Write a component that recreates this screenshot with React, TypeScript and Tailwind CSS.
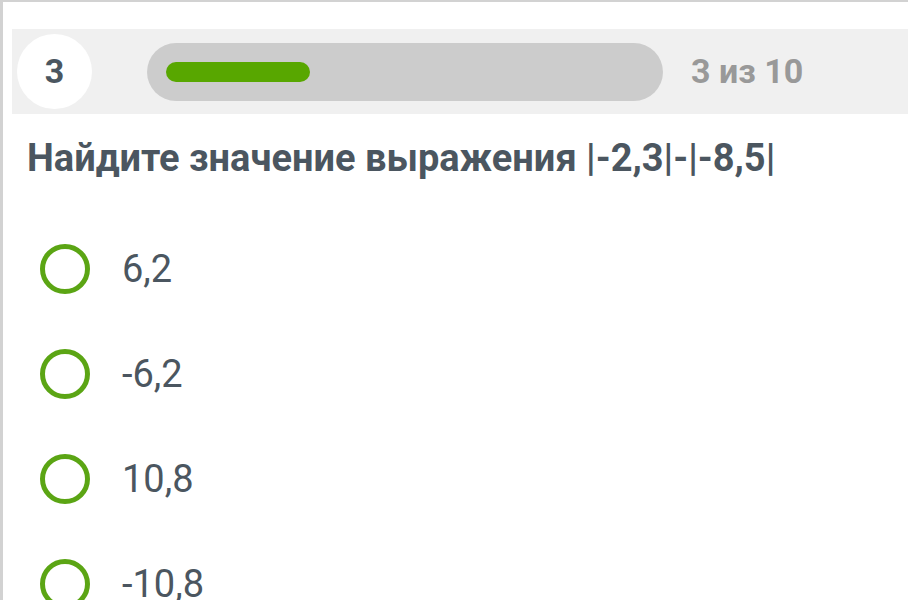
import React from "react";

const answers = ["6,2", "-6,2", "10,8", "-10,8"];

function Option({ label }: { label: string }) {
  return (
    <div className="flex h-[105px] items-center">
      <span className="ml-[37px] box-border h-[50px] w-[50px] shrink-0 rounded-full border-[5px] border-[#5ba514]" />
      <span className="ml-[32px] text-[38px] leading-none text-[#4b5660]">{label}</span>
    </div>
  );
}

export default function App() {
  return (
    <div
      className="h-[600px] w-[908px] overflow-hidden border-l-[3px] border-t-2 border-[#d2d2d2] bg-white"
      style={{ fontFamily: "Roboto, 'Noto Sans', sans-serif" }}
    >
      {/* progress header */}
      <div className="ml-[9px] mt-[27px] flex h-[85px] items-center bg-[#f0f0f0]">
        <div className="ml-[5px] flex h-[75px] w-[75px] shrink-0 items-center justify-center rounded-full bg-white text-[34px] font-bold text-[#4b5660]">
          3
        </div>
        <div className="ml-[55px] flex h-[58px] w-[516px] shrink-0 items-center rounded-full bg-[#cccccc] pl-[19px]">
          <div className="h-[20px] w-[144px] rounded-full bg-[#58a700]" />
        </div>
        <div className="ml-[28px] text-[34px] font-bold text-[#999999]">3 из 10</div>
      </div>

      <h1 className="ml-[24px] mt-[20px] text-[38px] font-bold leading-[48px] text-[#4b5660]">
        Найдите значение выражения |-2,3|-|-8,5|
      </h1>

      <div className="mt-[34px]">
        {answers.map((a) => (
          <Option key={a} label={a} />
        ))}
      </div>
    </div>
  );
}
